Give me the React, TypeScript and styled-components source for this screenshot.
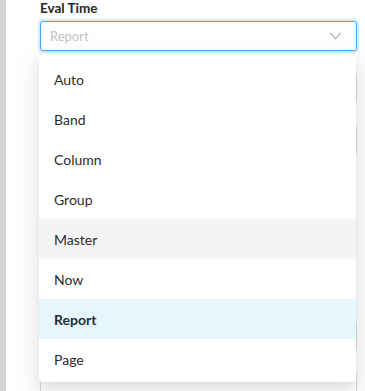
import React from "react";
import styled, { createGlobalStyle } from "styled-components";

const options = ["Auto", "Band", "Column", "Group", "Master", "Now", "Report", "Page"];
const selected = "Report";
const hovered = "Master";

const App = (): JSX.Element => {
  return (
    <>
      <GlobalStyle />
      <Page>
        <SideStrip />
        <Form>
          <Field>
            <Label>Eval Time</Label>
            <SelectWrap>
              <SelectBox>
                <Placeholder>Report</Placeholder>
                <Chevron viewBox="0 0 14 9">
                  <path d="M1 1l6 6.5L13 1" />
                </Chevron>
              </SelectBox>
              <Menu>
                {options.map((o) => (
                  <Option key={o} selected={o === selected} hovered={o === hovered}>
                    {o}
                  </Option>
                ))}
              </Menu>
            </SelectWrap>
          </Field>
          {/* fields under the open menu */}
          <Field>
            <Label under>Increment Type</Label>
            <Input />
          </Field>
          <Field>
            <Label under>Reset Type</Label>
            <Input />
          </Field>
          <Divider />
          <Group>
            <Label under>Calculation</Label>
            <Label under>Value Class</Label>
            <Label under>Pattern</Label>
            <Label under>Markup</Label>
            <Label under>Evaluation Group</Label>
          </Group>
          <Field>
            <Label under>Hyperlink Type</Label>
            <Input />
          </Field>
          <Field>
            <Label>Target</Label>
            <Input />
          </Field>
        </Form>
      </Page>
    </>
  );
};

export default App;

const GlobalStyle = createGlobalStyle`
  html, body {
    margin: 0;
    padding: 0;
    background: #ffffff;
    overflow: hidden;
  }
  body {
    font-family: Lato, "Noto Sans", sans-serif;
    color: #333333;
  }
`;

const Page = styled.div`
  display: flex;
  height: 391px;
  overflow: hidden;
`;

const SideStrip = styled.div`
  width: 6px;
  flex-shrink: 0;
  background: #d4d4d4;
`;

const Form = styled.div`
  flex: 1;
  padding: 0 8px 0 34px;
  display: flex;
  flex-direction: column;
`;

const Field = styled.div`
  display: flex;
  flex-direction: column;
`;

const Label = styled.div<{ under?: boolean }>`
  font-size: 13.5px;
  font-weight: 700;
  line-height: 17px;
  height: 17px;
  margin-top: ${(p) => (p.under ? "3px" : "0")};
  margin-bottom: ${(p) => (p.under ? "2px" : "4px")};
  color: #262626;
`;

const SelectWrap = styled.div`
  position: relative;
`;

const SelectBox = styled.div`
  height: 30px;
  box-sizing: border-box;
  border: 1px solid #40a9ff;
  border-radius: 3px;
  box-shadow: 0 0 0 2px rgba(24, 144, 255, 0.18);
  display: flex;
  align-items: center;
  justify-content: space-between;
  padding: 0 14px 0 9px;
  background: #fff;
`;

const Placeholder = styled.span`
  font-size: 13px;
  color: #c4c4c4;
`;

const Chevron = styled.svg`
  width: 13px;
  height: 8px;
  fill: none;
  stroke: #a6a6a6;
  stroke-width: 1.2;
`;

const Menu = styled.div`
  position: absolute;
  top: 34px;
  left: -1px;
  right: 1px;
  z-index: 10;
  background: #fff;
  border-radius: 4px;
  padding: 4px 0 3px;
  box-shadow: 0 6px 16px rgba(0, 0, 0, 0.08), 0 3px 6px -4px rgba(0, 0, 0, 0.12),
    0 9px 28px 8px rgba(0, 0, 0, 0.05);
`;

const Option = styled.div<{ selected?: boolean; hovered?: boolean }>`
  height: 40px;
  display: flex;
  align-items: center;
  padding-left: 15px;
  font-size: 14px;
  color: #2b2b2b;
  font-weight: ${(p) => (p.selected ? 700 : 400)};
  background: ${(p) => (p.selected ? "#e6f6fd" : p.hovered ? "#f4f4f4" : "transparent")};
`;

const Input = styled.div`
  height: 30px;
  box-sizing: border-box;
  border: 1px solid #d9d9d9;
  border-radius: 3px;
`;

const Divider = styled.div`
  height: 1px;
  background: #e8e8e8;
  margin-top: 10px;
`;

const Group = styled.div`
  display: flex;
  flex-direction: column;
  padding-top: 24px;
  height: 148px;
  box-sizing: border-box;
`;
